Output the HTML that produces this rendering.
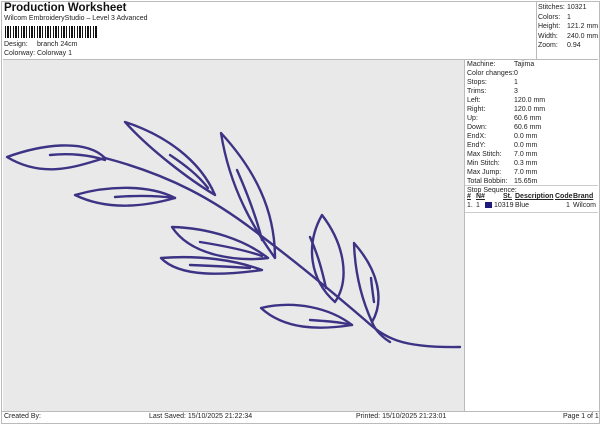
<!DOCTYPE html>
<html><head><meta charset="utf-8"><style>
body{margin:0;width:600px;height:424px;background:#fff;font-family:"Liberation Sans",sans-serif;color:#222;position:relative;overflow:hidden}
.a{position:absolute;white-space:nowrap}
.s{font-size:7px}
</style></head><body>
<div class="a" style="left:1px;top:1px;width:597px;height:421px;border:1px solid #bbb"></div>
<div class="a" style="left:4px;top:2px;font-size:11.5px;font-weight:bold;color:#111">Production Worksheet</div>
<div class="a s" style="left:4px;top:15px">Wilcom EmbroideryStudio – Level 3 Advanced</div>
<div class="a" style="left:5px;top:26px;width:93px;height:12px;background:repeating-linear-gradient(90deg,#111 0 1px,#fff 1px 2px,#111 2px 4px,#fff 4px 5px,#111 5px 6px,#fff 6px 8px)"></div>
<div class="a s" style="left:4px;top:41px">Design:</div><div class="a s" style="left:37px;top:41px">branch 24cm</div>
<div class="a s" style="left:4px;top:50px">Colorway:</div><div class="a s" style="left:37px;top:50px">Colorway 1</div>
<div class="a" style="left:536px;top:1px;width:1px;height:58px;background:#bbb"></div>
<div class="a s" style="left:538px;top:3px;line-height:9.6px">Stitches:<br>Colors:<br>Height:<br>Width:<br>Zoom:</div>
<div class="a s" style="left:567px;top:3px;line-height:9.6px">10321<br>1<br>121.2 mm<br>240.0 mm<br>0.94</div>
<div class="a" style="left:3px;top:59px;width:461px;height:352px;background:#e9e9e9;border-top:1px solid #bbb"></div>
<div class="a" style="left:464px;top:59px;width:1px;height:353px;background:#bbb"></div>
<div class="a" style="left:464px;top:59px;width:134px;height:1px;background:#bbb"></div>
<div class="a s" style="left:467px;top:60px;line-height:9px">Machine:<br>Color changes:<br>Stops:<br>Trims:<br>Left:<br>Right:<br>Up:<br>Down:<br>EndX:<br>EndY:<br>Max Stitch:<br>Min Stitch:<br>Max Jump:<br>Total Bobbin:<br>Stop Sequence:</div>
<div class="a s" style="left:514px;top:60px;line-height:9px">Tajima<br>0<br>1<br>3<br>120.0 mm<br>120.0 mm<br>60.6 mm<br>60.6 mm<br>0.0 mm<br>0.0 mm<br>7.0 mm<br>0.3 mm<br>7.0 mm<br>15.65m</div>
<div class="a" style="left:465px;top:185px;width:133px;height:1px;background:#ccc"></div>
<div class="a s" style="left:467px;top:193px;font-weight:bold;text-decoration:underline">#</div>
<div class="a s" style="left:476px;top:193px;font-weight:bold;text-decoration:underline">N#</div>
<div class="a s" style="left:503px;top:193px;font-weight:bold;text-decoration:underline">St.</div>
<div class="a s" style="left:515px;top:193px;font-weight:bold;text-decoration:underline">Description</div>
<div class="a s" style="left:555px;top:193px;font-weight:bold;text-decoration:underline">Code</div>
<div class="a s" style="left:573px;top:193px;font-weight:bold;text-decoration:underline">Brand</div>
<div class="a s" style="left:467px;top:202px">1.</div><div class="a s" style="left:476px;top:202px">1</div>
<div class="a" style="left:485px;top:202px;width:7px;height:6px;background:#1f1a7a"></div>
<div class="a s" style="left:494px;top:202px">10319</div><div class="a s" style="left:515px;top:202px">Blue</div>
<div class="a s" style="left:566px;top:202px">1</div><div class="a s" style="left:573px;top:202px">Wilcom</div>
<div class="a" style="left:465px;top:212px;width:133px;height:1px;background:#ccc"></div>
<div class="a" style="left:1px;top:411px;width:598px;height:1px;background:#bbb"></div>
<div class="a s" style="left:4px;top:413px">Created By:</div>
<div class="a s" style="left:149px;top:413px">Last Saved: 15/10/2025 21:22:34</div>
<div class="a s" style="left:356px;top:413px">Printed: 15/10/2025 21:23:01</div>
<div class="a s" style="left:563px;top:413px">Page 1 of 1</div>
<svg class="a" style="left:0;top:0" width="600" height="424" fill="none" stroke="#3d3385" stroke-width="2.4" stroke-linecap="round" stroke-linejoin="round">
<path d="M105,158 C170,175 215,200 260,235 C300,265 330,290 365,320 C385,338 400,348 460,347"/>
<path d="M7,157 C40,145 85,138 105,158 C80,165 45,180 7,157 Z"/>
<path d="M50,155 C70,153 90,155 105,160"/>
<path d="M75,195 C110,185 150,185 175,198 C150,205 110,212 75,195 Z"/>
<path d="M115,197 C140,195 160,196 175,198"/>
<path d="M125,122 C165,135 200,160 215,195 C190,180 150,150 125,122 Z"/>
<path d="M170,155 C185,165 198,175 208,188"/>
<path d="M221,133 C255,170 275,210 275,258 C255,230 230,190 221,133 Z"/>
<path d="M237,170 C248,195 257,220 262,240"/>
<path d="M172,227 C210,228 245,240 268,258 C235,262 190,255 172,227 Z"/>
<path d="M200,242 C225,246 245,250 262,256"/>
<path d="M161,258 C200,255 235,260 262,270 C225,275 180,278 161,258 Z"/>
<path d="M190,265 C215,266 235,267 250,268"/>
<path d="M322,215 C345,245 350,280 335,302 C310,280 305,245 322,215 Z"/>
<path d="M310,237 C318,255 322,270 326,288"/>
<path d="M354,243 C378,270 385,300 372,322 C362,300 355,275 354,243 Z"/>
<path d="M371,278 C372,288 373,295 374,302"/>
<path d="M372,322 C375,330 382,337 390,342"/>
<path d="M261,308 C295,300 330,308 352,325 C320,330 285,330 261,308 Z"/>
<path d="M310,320 C325,321 340,322 352,325"/>
</svg>
</body></html>
